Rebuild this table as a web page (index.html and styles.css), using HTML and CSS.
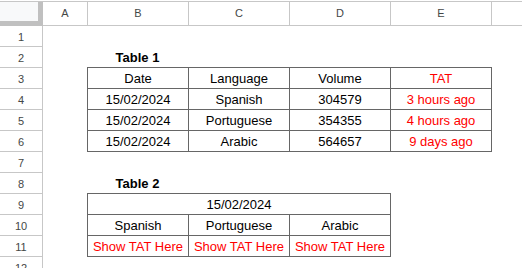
FILE: index.html
```html
<!DOCTYPE html>
<html>
<head>
<meta charset="utf-8">
<link rel="stylesheet" href="styles.css">
</head>
<body>
<div class="sheet">
  <div class="colhdr">
    <div class="corner"></div>
    <div class="ch cha">A</div>
    <div class="ch chw">B</div>
    <div class="ch chw">C</div>
    <div class="ch chw">D</div>
    <div class="ch chw">E</div>
    <div class="ch chf"></div>
  </div>
  <div class="body">
    <div class="rowhdr">
      <div class="rh">1</div>
      <div class="rh">2</div>
      <div class="rh">3</div>
      <div class="rh">4</div>
      <div class="rh">5</div>
      <div class="rh">6</div>
      <div class="rh">7</div>
      <div class="rh">8</div>
      <div class="rh">9</div>
      <div class="rh">10</div>
      <div class="rh">11</div>
      <div class="rh">12</div>
    </div>
    <div class="grid">
      <div class="title title1">Table 1</div>
      <div class="tbl tbl1">
        <div class="cell">Date</div>
        <div class="cell">Language</div>
        <div class="cell">Volume</div>
        <div class="cell red">TAT</div>
        <div class="cell">15/02/2024</div>
        <div class="cell">Spanish</div>
        <div class="cell">304579</div>
        <div class="cell red">3 hours ago</div>
        <div class="cell">15/02/2024</div>
        <div class="cell">Portuguese</div>
        <div class="cell">354355</div>
        <div class="cell red">4 hours ago</div>
        <div class="cell">15/02/2024</div>
        <div class="cell">Arabic</div>
        <div class="cell">564657</div>
        <div class="cell red">9 days ago</div>
      </div>
      <div class="title title2">Table 2</div>
      <div class="tbl tbl2">
        <div class="cell merged">15/02/2024</div>
        <div class="cell">Spanish</div>
        <div class="cell">Portuguese</div>
        <div class="cell">Arabic</div>
        <div class="cell red">Show TAT Here</div>
        <div class="cell red">Show TAT Here</div>
        <div class="cell red">Show TAT Here</div>
      </div>
    </div>
  </div>
</div>
</body>
</html>
```
FILE: styles.css
```css
* { box-sizing: border-box; }
html, body {
  margin: 0;
  padding: 0;
  background: #fff;
  overflow: hidden;
}
.sheet {
  width: 522px;
  height: 268px;
  overflow: hidden;
  font-family: "Liberation Sans", Arial, sans-serif;
  color: #000;
}
.colhdr {
  display: flex;
  margin-top: 1px;
  border-top: 1px solid #c7c7c7;
  height: 25px;
}
.corner {
  width: 43px;
  height: 24px;
  background: #f8f9fa;
  border-right: 5px solid #c0c0c0;
  border-bottom: 5px solid #c0c0c0;
}
.ch {
  height: 24px;
  border-right: 1px solid #c7c7c7;
  border-bottom: 1px solid #c7c7c7;
  display: flex;
  align-items: center;
  justify-content: center;
  font-size: 11px;
  color: #444746;
  padding-bottom: 1px;
}
.cha { width: 45px; }
.chw { width: 101px; }
.chf { flex: 1; border-right: none; }

.body {
  display: flex;
}
.rowhdr {
  width: 43px;
  flex: none;
  display: flex;
  flex-direction: column;
}
.rh {
  height: 21px;
  flex: none;
  border-right: 1px solid #c7c7c7;
  border-bottom: 1px solid #c7c7c7;
  display: flex;
  align-items: center;
  justify-content: center;
  font-size: 11px;
  color: #444746;
  padding-top: 1px;
}
.grid {
  flex: 1;
  display: grid;
  grid-template-columns: 44px repeat(4, 101px) 1fr;
  grid-template-rows: 20px repeat(11, 21px);
}
.title {
  grid-column: 2;
  display: flex;
  justify-content: center;
  align-items: flex-end;
  padding-bottom: 2px;
  font-size: 13px;
  line-height: 15px;
  font-weight: bold;
}
.title1 { grid-row: 2; }
.title2 { grid-row: 8; }

.tbl {
  display: grid;
  grid-template-columns: repeat(var(--cols), 101px);
  grid-auto-rows: 21px;
  border-right: 1px solid #666;
  border-bottom: 1px solid #666;
  align-self: start;
  justify-self: start;
}
.tbl1 {
  --cols: 4;
  grid-column: 2 / span 4;
  grid-row: 3 / span 4;
  width: 405px;
  height: 85px;
}
.tbl2 {
  --cols: 3;
  grid-column: 2 / span 3;
  grid-row: 9 / span 3;
  width: 304px;
  height: 64px;
}
.cell {
  border-left: 1px solid #666;
  border-top: 1px solid #666;
  display: flex;
  justify-content: center;
  align-items: flex-end;
  padding-bottom: 2px;
  font-size: 13px;
  line-height: 15px;
  white-space: nowrap;
}
.merged { grid-column: 1 / -1; }
.red { color: #ff0000; }
```
